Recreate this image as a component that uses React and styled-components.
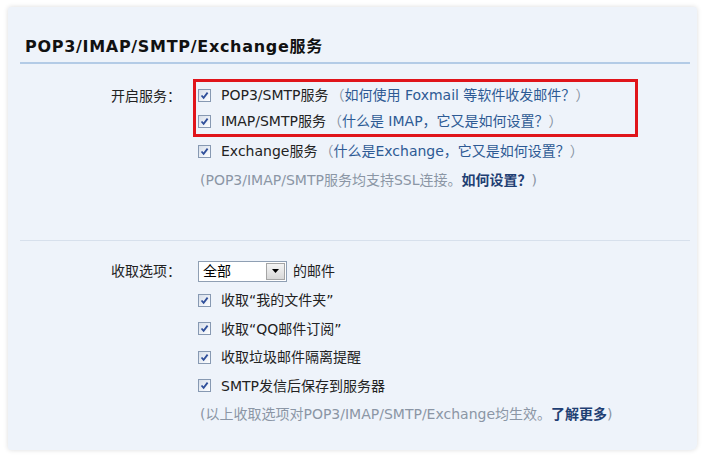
import styled, { createGlobalStyle } from "styled-components";

const GlobalStyle = createGlobalStyle`
    html, body {
        margin: 0;
        padding: 0;
        background: #ffffff;
    }
    body {
        font-family: "DejaVu Sans", "Noto Sans CJK SC", sans-serif;
        font-size: 14px;
        color: #333;
    }
`;

const Check = () => (
    <CheckBox>
        <svg width="9" height="9" viewBox="0 0 9 9">
            <path d="M1.5 4.5 L3.6 6.8 L7.6 1.6" fill="none" stroke="#2f4f9a" strokeWidth="1.8" />
        </svg>
    </CheckBox>
);

const Option = ({ label, children, h }) => (
    <Row h={h}>
        <Check />
        <RowText>
            {label}
            {children}
        </RowText>
    </Row>
);

const App = () => {
    return (
        <Page>
            <GlobalStyle />
            <Panel>
                <Section>
                    <Title>POP3/IMAP/SMTP/Exchange服务</Title>
                    <Form>
                        <Label top="3px">开启服务：</Label>
                        <Fields>
                            <Highlight>
                                <Option h="26px" label="POP3/SMTP服务">
                                    <Paren>（<Link>如何使用 Foxmail 等软件收发邮件？</Link>）</Paren>
                                </Option>
                                <Option h="26px" label="IMAP/SMTP服务">
                                    <Paren>（<Link>什么是 IMAP，它又是如何设置？</Link>）</Paren>
                                </Option>
                            </Highlight>
                            <Option label="Exchange服务">
                                <Paren>（<Link>什么是Exchange，它又是如何设置？</Link>）</Paren>
                            </Option>
                            <Hint>
                                (POP3/IMAP/SMTP服务均支持SSL连接。<StrongLink>如何设置？</StrongLink>)
                            </Hint>
                        </Fields>
                    </Form>
                </Section>
                <Section last>
                    <Form>
                        <Label>收取选项：</Label>
                        <Fields>
                            <Row>
                                <Select>
                                    <SelectValue>全部</SelectValue>
                                    <SelectButton>
                                        <svg width="7" height="4" viewBox="0 0 7 4">
                                            <path d="M0 0 H7 L3.5 4 Z" fill="#000" />
                                        </svg>
                                    </SelectButton>
                                </Select>
                                <RowText>的邮件</RowText>
                            </Row>
                            <Option label="收取“我的文件夹”" />
                            <Option label="收取“QQ邮件订阅”" />
                            <Option label="收取垃圾邮件隔离提醒" />
                            <Option label="SMTP发信后保存到服务器" />
                            <Hint>
                                (以上收取选项对POP3/IMAP/SMTP/Exchange均生效。<StrongLink>了解更多</StrongLink>)
                            </Hint>
                        </Fields>
                    </Form>
                </Section>
            </Panel>
        </Page>
    );
};

export default App;

const Page = styled.div`
    width: 706px;
    height: 458px;
    padding: 7px 9px 8px 8px;
    box-sizing: border-box;
`;

const Panel = styled.div`
    height: 100%;
    background: #eef3fa;
    border-radius: 3px 3px 6px 3px;
    box-shadow: 0 0 5px rgba(0, 0, 0, 0.14);
    padding: 0 0 0 12px;
    box-sizing: border-box;
`;

const Section = styled.div`
    padding-top: ${(p) => (p.last ? "16px" : "30px")};
    padding-bottom: ${(p) => (p.last ? "0" : "46px")};
    margin-right: ${(p) => (p.last ? "0" : "7px")};
    border-bottom: ${(p) => (p.last ? "none" : "1px solid #d7e0ec")};
`;

const Title = styled.h2`
    margin: 0 0 15px;
    padding: 0 0 5px 5px;
    font-size: 16px;
    line-height: 20px;
    letter-spacing: 0.7px;
    font-weight: bold;
    color: #111;
    border-bottom: 2px solid #b3cbe6;
`;

const Form = styled.div`
    display: grid;
    grid-template-columns: 161px 1fr;
    column-gap: 17px;
`;

const Label = styled.div`
    text-align: right;
    height: 28px;
    line-height: 28px;
    margin-top: ${(p) => p.top || "0"};
    color: #222;
`;

const Fields = styled.div`
    display: flex;
    flex-direction: column;
`;

const Highlight = styled.div`
    width: 437px;
    margin-left: -5px;
    padding: 0 0 0 2px;
    border: 3px solid #e0141a;
`;

const Row = styled.div`
    display: flex;
    align-items: center;
    height: ${(p) => p.h || "28.6px"};
    white-space: nowrap;
`;

const CheckBox = styled.span`
    display: inline-flex;
    align-items: center;
    justify-content: center;
    flex-shrink: 0;
    width: 11px;
    height: 11px;
    margin-right: 10px;
    border: 1px solid #8799b2;
    background: linear-gradient(135deg, #d6deea 0%, #f6f8fb 80%, #ffffff 100%);
`;

const RowText = styled.span`
    color: #222;
    line-height: 18px;
`;

const Paren = styled.span`
    color: #8893a3;
    margin-left: 2px;
`;

const Link = styled.span`
    color: #2d5a94;
`;

const StrongLink = styled.span`
    color: #1f3f73;
    font-weight: 600;
`;

const Hint = styled.div`
    height: 28.6px;
    line-height: 28.6px;
    color: #8b96a5;
    white-space: nowrap;
    padding-left: 2px;
`;

const Select = styled.div`
    display: flex;
    align-items: stretch;
    width: 87px;
    height: 19px;
    margin-right: 6px;
    border: 1px solid #8f9fb3;
    background: #fff;
`;

const SelectValue = styled.span`
    flex: 1;
    padding-left: 4px;
    line-height: 19px;
    color: #000;
`;

const SelectButton = styled.span`
    display: flex;
    align-items: center;
    justify-content: center;
    width: 17px;
    margin: 1px;
    border: 1px solid #a5a5a5;
    background: linear-gradient(#f4f4f4, #d8d8d8);
`;
